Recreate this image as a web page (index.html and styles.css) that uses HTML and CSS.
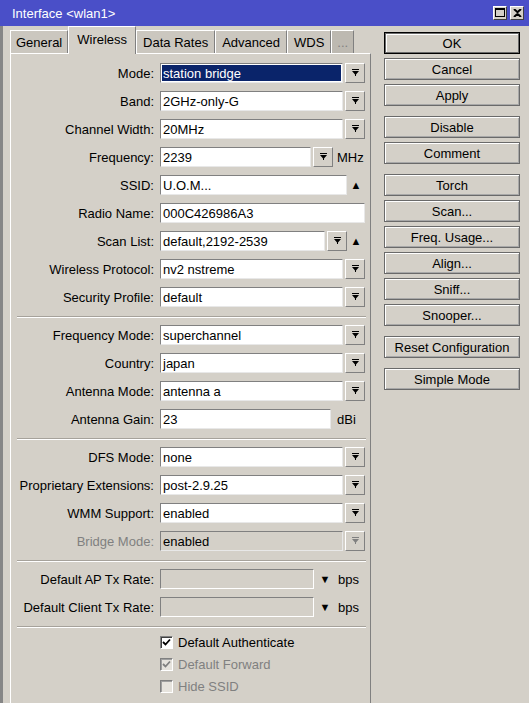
FILE: index.html
```html
<!DOCTYPE html>
<html lang="en">
<head>
    <meta charset="UTF-8">
    <meta name="viewport" content="width=device-width, initial-scale=1.0">
    <title>Interface &lt;wlan1&gt;</title>
    <link rel="stylesheet" href="styles.css">
</head>
<body>
    <div class="window">
        <div class="titlebar">
            <span class="title">Interface &lt;wlan1&gt;</span>
            <div class="title-btns">
                <span class="tbtn">
                    <svg width="10" height="9" viewBox="0 0 10 9"><path d="M0 0h10v9H0z M1 2v6h8V2z" fill="#000" fill-rule="evenodd"/></svg>
                </span>
                <span class="tbtn">
                    <svg width="9" height="8" viewBox="0 0 9 8"><path d="M1 0L4.5 3.2L8 0M1 8L4.5 4.8L8 8" stroke="#000" stroke-width="2" fill="none"/></svg>
                </span>
            </div>
        </div>

        <div class="body">
            <div class="left">
                <div class="tabs">
                    <div class="tab first">General</div>
                    <div class="tab active">Wireless</div>
                    <div class="tab">Data Rates</div>
                    <div class="tab">Advanced</div>
                    <div class="tab">WDS</div>
                    <div class="tab more">...</div>
                </div>

                <div class="panel">
                    <!-- general radio settings -->
                    <div class="row">
                        <label class="label">Mode:</label>
                        <div class="field w-sel selected">station bridge</div>
                        <span class="drop"><svg width="7" height="8" viewBox="0 0 7 8"><path d="M0 0h7v1H0z M0 2h7L4 5.5V7H3V5.5z"/></svg></span>
                    </div>
                    <div class="row">
                        <label class="label">Band:</label>
                        <div class="field w-sel">2GHz-only-G</div>
                        <span class="drop"><svg width="7" height="8" viewBox="0 0 7 8"><path d="M0 0h7v1H0z M0 2h7L4 5.5V7H3V5.5z"/></svg></span>
                    </div>
                    <div class="row">
                        <label class="label">Channel Width:</label>
                        <div class="field w-sel">20MHz</div>
                        <span class="drop"><svg width="7" height="8" viewBox="0 0 7 8"><path d="M0 0h7v1H0z M0 2h7L4 5.5V7H3V5.5z"/></svg></span>
                    </div>
                    <div class="row">
                        <label class="label">Frequency:</label>
                        <div class="field w-freq">2239</div>
                        <span class="drop"><svg width="7" height="8" viewBox="0 0 7 8"><path d="M0 0h7v1H0z M0 2h7L4 5.5V7H3V5.5z"/></svg></span>
                        <span class="unit">MHz</span>
                    </div>
                    <div class="row">
                        <label class="label">SSID:</label>
                        <div class="field w-ssid">U.O.M...</div>
                        <span class="up">&#9650;</span>
                    </div>
                    <div class="row">
                        <label class="label">Radio Name:</label>
                        <div class="field w-full">000C426986A3</div>
                    </div>
                    <div class="row">
                        <label class="label">Scan List:</label>
                        <div class="field w-scan">default,2192-2539</div>
                        <span class="drop"><svg width="7" height="8" viewBox="0 0 7 8"><path d="M0 0h7v1H0z M0 2h7L4 5.5V7H3V5.5z"/></svg></span>
                        <span class="up">&#9650;</span>
                    </div>
                    <div class="row">
                        <label class="label">Wireless Protocol:</label>
                        <div class="field w-sel">nv2 nstreme</div>
                        <span class="drop"><svg width="7" height="8" viewBox="0 0 7 8"><path d="M0 0h7v1H0z M0 2h7L4 5.5V7H3V5.5z"/></svg></span>
                    </div>
                    <div class="row">
                        <label class="label">Security Profile:</label>
                        <div class="field w-sel">default</div>
                        <span class="drop"><svg width="7" height="8" viewBox="0 0 7 8"><path d="M0 0h7v1H0z M0 2h7L4 5.5V7H3V5.5z"/></svg></span>
                    </div>

                    <div class="sep"></div>

                    <div class="row">
                        <label class="label">Frequency Mode:</label>
                        <div class="field w-sel">superchannel</div>
                        <span class="drop"><svg width="7" height="8" viewBox="0 0 7 8"><path d="M0 0h7v1H0z M0 2h7L4 5.5V7H3V5.5z"/></svg></span>
                    </div>
                    <div class="row">
                        <label class="label">Country:</label>
                        <div class="field w-sel">japan</div>
                        <span class="drop"><svg width="7" height="8" viewBox="0 0 7 8"><path d="M0 0h7v1H0z M0 2h7L4 5.5V7H3V5.5z"/></svg></span>
                    </div>
                    <div class="row">
                        <label class="label">Antenna Mode:</label>
                        <div class="field w-sel">antenna a</div>
                        <span class="drop"><svg width="7" height="8" viewBox="0 0 7 8"><path d="M0 0h7v1H0z M0 2h7L4 5.5V7H3V5.5z"/></svg></span>
                    </div>
                    <div class="row">
                        <label class="label">Antenna Gain:</label>
                        <div class="field w-gain">23</div>
                        <span class="unit unit-gain">dBi</span>
                    </div>

                    <div class="sep"></div>

                    <div class="row">
                        <label class="label">DFS Mode:</label>
                        <div class="field w-sel">none</div>
                        <span class="drop"><svg width="7" height="8" viewBox="0 0 7 8"><path d="M0 0h7v1H0z M0 2h7L4 5.5V7H3V5.5z"/></svg></span>
                    </div>
                    <div class="row">
                        <label class="label">Proprietary Extensions:</label>
                        <div class="field w-sel">post-2.9.25</div>
                        <span class="drop"><svg width="7" height="8" viewBox="0 0 7 8"><path d="M0 0h7v1H0z M0 2h7L4 5.5V7H3V5.5z"/></svg></span>
                    </div>
                    <div class="row">
                        <label class="label">WMM Support:</label>
                        <div class="field w-sel">enabled</div>
                        <span class="drop"><svg width="7" height="8" viewBox="0 0 7 8"><path d="M0 0h7v1H0z M0 2h7L4 5.5V7H3V5.5z"/></svg></span>
                    </div>
                    <div class="row disabled">
                        <label class="label">Bridge Mode:</label>
                        <div class="field w-sel">enabled</div>
                        <span class="drop"><svg width="7" height="8" viewBox="0 0 7 8"><path d="M0 0h7v1H0z M0 2h7L4 5.5V7H3V5.5z"/></svg></span>
                    </div>

                    <div class="sep"></div>

                    <div class="row">
                        <label class="label">Default AP Tx Rate:</label>
                        <div class="field w-rate empty"></div>
                        <span class="down">&#9660;</span>
                        <span class="unit">bps</span>
                    </div>
                    <div class="row">
                        <label class="label">Default Client Tx Rate:</label>
                        <div class="field w-rate empty"></div>
                        <span class="down">&#9660;</span>
                        <span class="unit">bps</span>
                    </div>

                    <div class="sep"></div>

                    <div class="check-row">
                        <span class="checkbox"><svg width="9" height="9" viewBox="0 0 9 9"><path d="M1 4l2.5 2.5L8 1.5" stroke="#000" stroke-width="1.8" fill="none"/></svg></span>
                        <span>Default Authenticate</span>
                    </div>
                    <div class="check-row disabled">
                        <span class="checkbox"><svg width="9" height="9" viewBox="0 0 9 9"><path d="M1 4l2.5 2.5L8 1.5" stroke="#808080" stroke-width="1.8" fill="none"/></svg></span>
                        <span>Default Forward</span>
                    </div>
                    <div class="check-row disabled">
                        <span class="checkbox"></span>
                        <span>Hide SSID</span>
                    </div>
                </div>
            </div>

            <div class="actions">
                <button class="btn default">OK</button>
                <button class="btn">Cancel</button>
                <button class="btn">Apply</button>
                <button class="btn group">Disable</button>
                <button class="btn">Comment</button>
                <button class="btn group">Torch</button>
                <button class="btn">Scan...</button>
                <button class="btn">Freq. Usage...</button>
                <button class="btn">Align...</button>
                <button class="btn">Sniff...</button>
                <button class="btn">Snooper...</button>
                <button class="btn group">Reset Configuration</button>
                <button class="btn group">Simple Mode</button>
            </div>
        </div>
    </div>
</body>
</html>
```

FILE: styles.css
```css
body {
    margin: 0;
    font-family: 'Liberation Sans', Arial, sans-serif;
    font-size: 13px;
    color: #000;
    background-color: #d4d0c8;
}

.window {
    width: 529px;
    height: 703px;
    display: flex;
    flex-direction: column;
    overflow: hidden;
    background-color: #d4d0c8;
}

/* Title bar */
.titlebar {
    height: 26px;
    flex-shrink: 0;
    display: flex;
    align-items: center;
    justify-content: space-between;
    background-color: #4a4fc8;
    color: #fff;
    padding: 0 5px 0 12px;
}

.title-btns {
    display: flex;
    gap: 3px;
    margin-top: -1px;
}

.tbtn {
    width: 14px;
    height: 14px;
    box-sizing: border-box;
    display: flex;
    align-items: center;
    justify-content: center;
    background-color: #d4d0c8;
    border: 1px solid;
    border-color: #fff #404040 #404040 #fff;
}

/* Main area */
.body {
    flex: 1;
    display: flex;
    border-left: 3px solid #868686;
    padding-left: 7px;
}

.left {
    width: 361px;
    display: flex;
    flex-direction: column;
}

/* Tabs */
.tabs {
    height: 27px;
    display: flex;
    align-items: flex-end;
    position: relative;
    z-index: 1;
}

.tab {
    height: 23px;
    box-sizing: border-box;
    padding: 0 6px;
    display: flex;
    align-items: center;
    border-top: 1px solid #fff;
    border-left: 1px solid #fff;
    border-right: 1px solid #808080;
    background-color: #cbc7bf;
}

.tab.first {
    padding: 0 5px;
}

.tab.active {
    height: 28px;
    margin-bottom: -1px;
    padding: 0 8px 2px;
    background-color: #d4d0c8;
}

.tab.more {
    padding: 0 5px;
    color: #808080;
    background-color: #bdb9b1;
}

/* Tab panel */
.panel {
    flex: 1;
    border-top: 1px solid #fff;
    border-left: 1px solid #fff;
    border-right: 1px solid #808080;
    padding-top: 5px;
}

.row {
    height: 28px;
    display: flex;
    align-items: center;
}

.label {
    width: 143px;
    margin-right: 6px;
    text-align: right;
    white-space: nowrap;
}

.field {
    height: 20px;
    box-sizing: border-box;
    padding-left: 2px;
    display: flex;
    align-items: center;
    background-color: #fff;
    border: 1px solid;
    border-color: #808080 #e8e8e8 #e8e8e8 #808080;
    white-space: nowrap;
}

.field.selected {
    background-color: #0a246a;
    color: #fff;
    box-shadow: inset 0 0 0 1px #fff;
}

.field.empty {
    background-color: #d4d0c8;
    border-color: #808080 #fff #fff #808080;
}

.w-full { width: 205px; }
.w-sel  { width: 183px; }
.w-freq { width: 151px; }
.w-ssid { width: 187px; }
.w-scan { width: 165px; }
.w-gain { width: 171px; }
.w-rate { width: 154px; }

.drop {
    width: 20px;
    height: 20px;
    box-sizing: border-box;
    margin-left: 2px;
    display: flex;
    align-items: center;
    justify-content: center;
    background-color: #d4d0c8;
    border: 1px solid;
    border-color: #fff #808080 #808080 #fff;
}

.up {
    width: 18px;
    text-align: center;
    font-size: 11px;
}

.down {
    width: 18px;
    margin-left: 2px;
    text-align: center;
    font-size: 11px;
}

.unit {
    margin-left: 4px;
}

.unit-gain {
    margin-left: 6px;
}

.disabled .label,
.disabled {
    color: #808080;
}

.row.disabled .field {
    background-color: #d4d0c8;
    color: #000;
}

.row.disabled .drop svg {
    fill: #808080;
}

.sep {
    margin: 5px 4px 3px 6px;
    border-top: 1px solid #a6a29b;
    border-bottom: 1px solid #fff;
}

/* Checkboxes */
.check-row {
    height: 22px;
    display: flex;
    align-items: center;
    padding-left: 149px;
}

.checkbox {
    width: 13px;
    height: 13px;
    box-sizing: border-box;
    margin-right: 5px;
    display: flex;
    align-items: center;
    justify-content: center;
    background-color: #fff;
    border: 1px solid;
    border-color: #808080 #fff #fff #808080;
    box-shadow: inset 1px 1px 0 #404040;
}

.check-row.disabled .checkbox {
    background-color: #e6e3dd;
    box-shadow: inset 1px 1px 0 #a0a0a0;
}

/* Buttons column */
.actions {
    width: 136px;
    margin-left: 13px;
    padding-top: 6px;
    display: flex;
    flex-direction: column;
    gap: 4px;
}

.btn {
    height: 22px;
    padding: 0;
    font-family: inherit;
    font-size: 13px;
    color: #000;
    background-color: #d4d0c8;
    border: 1px solid #6a6a6a;
    box-shadow: inset 1px 1px 0 #fff, inset -1px -1px 0 #a8a8a8;
}

.btn.default {
    border-color: #000;
    box-shadow: inset 0 0 0 1px #6a6a6a, inset 2px 2px 0 #fff;
}

.btn.group {
    margin-top: 6px;
}
```
